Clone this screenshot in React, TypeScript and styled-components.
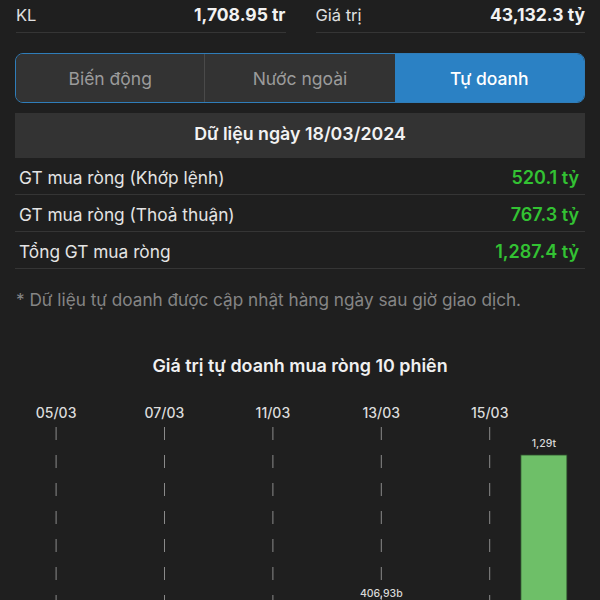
import React from "react";
import styled, { createGlobalStyle } from "styled-components";

const Global = createGlobalStyle`
  html, body { margin: 0; padding: 0; background: #1f1f1f; }
  body { font-family: Inter, "Noto Sans", sans-serif; color: #e6e6e6; -webkit-font-smoothing: antialiased; }
  * { box-sizing: border-box; }
`;

const Page = styled.div`
  padding: 0 15px;
  display: flex;
  flex-direction: column;
`;

const StatsRow = styled.div`
  display: grid;
  grid-template-columns: 1fr 1fr;
  column-gap: 30px;
  padding-left: 1px;
`;

const StatCell = styled.div`
  display: flex;
  justify-content: space-between;
  align-items: center;
  height: 33px;
  padding-bottom: 3px;
  border-bottom: 1px solid #353535;
`;

const StatLabel = styled.span`
  font-size: 16.5px;
  color: #e0e0e0;
`;

const StatValue = styled.span`
  font-size: 17.5px;
  font-weight: 700;
  color: #f2f2f2;
`;

const Segmented = styled.div`
  margin-top: 20px;
  height: 50px;
  display: grid;
  grid-template-columns: repeat(3, 1fr);
  border: 1.5px solid #2f7db9;
  border-radius: 8px;
  overflow: hidden;
  background: #343434;
`;

const Segment = styled.div<{ $active?: boolean; $divider?: boolean }>`
  display: flex;
  align-items: center;
  justify-content: center;
  font-size: 17.5px;
  font-weight: ${(p) => (p.$active ? 500 : 400)};
  color: ${(p) => (p.$active ? "#ffffff" : "#9b9b9b")};
  background: ${(p) => (p.$active ? "#2b81c4" : "#333333")};
  border-right: ${(p) => (p.$divider ? "1px solid #4a4a4a" : "none")};
`;

const DateHeader = styled.div`
  margin-top: 10px;
  height: 45px;
  padding-bottom: 4px;
  background: #333333;
  display: flex;
  align-items: center;
  justify-content: center;
  font-size: 17.8px;
  font-weight: 600;
  color: #f2f2f2;
`;

const DataRow = styled.div`
  height: 37px;
  display: flex;
  align-items: center;
  justify-content: space-between;
  padding: 2px 6px 0 4px;
  border-bottom: 1px solid #353535;
`;

const RowLabel = styled.span`
  font-size: 17.3px;
  color: #e4e4e4;
`;

const RowValue = styled.span`
  font-size: 18px;
  font-weight: 600;
  color: #33c233;
`;

const Note = styled.div`
  margin-top: 21px;
  padding-left: 1px;
  font-size: 17.2px;
  line-height: 20px;
  color: #858585;
`;

const ChartTitle = styled.div`
  margin-top: 45px;
  text-align: center;
  font-size: 17.9px;
  line-height: 22px;
  font-weight: 600;
  color: #f0f0f0;
`;

const ChartSvg = styled.svg`
  display: block;
  margin: 20px -15px 0;
`;

const rows = [
  { label: "GT mua ròng (Khớp lệnh)", value: "520.1 tỷ" },
  { label: "GT mua ròng (Thoả thuận)", value: "767.3 tỷ" },
  { label: "Tổng GT mua ròng", value: "1,287.4 tỷ" },
];

const sessions = [
  { d: "05/03", v: -300 },
  { d: "06/03", v: -150 },
  { d: "07/03", v: -200 },
  { d: "08/03", v: -100 },
  { d: "11/03", v: -250 },
  { d: "12/03", v: -120 },
  { d: "13/03", v: 406.93 },
  { d: "14/03", v: -80 },
  { d: "15/03", v: -180 },
  { d: "18/03", v: 1287.4 },
];

function Chart() {
  const top = 397;
  const base = 675;
  const H = 220;
  const max = 1287.4;
  const colW = 54.2;
  const x0 = 29;
  const oy = (y: number) => y - top;
  return (
    <ChartSvg width={600} height={320} viewBox={`0 0 600 320`}>
      {sessions.map((s, i) => {
        const cx = x0 + colW * i + colW / 2;
        const showLabel = i % 2 === 0;
        const h = (Math.abs(s.v) / max) * H;
        const y = s.v >= 0 ? base - h : base;
        return (
          <g key={s.d}>
            {showLabel && (
              <>
                <text
                  x={cx}
                  y={oy(418)}
                  textAnchor="middle"
                  fontFamily="Inter, 'Noto Sans', sans-serif"
                  fontSize={14}
                  fontWeight={500}
                  fill="#dcdcdc"
                >
                  {s.d}
                </text>
                <line
                  x1={cx}
                  x2={cx}
                  y1={oy(427)}
                  y2={320}
                  stroke="#8a8a8a"
                  strokeWidth={1}
                  strokeDasharray="13 15"
                />
              </>
            )}
            <rect
              x={cx - 23}
              y={oy(y)}
              width={46}
              height={h}
              fill={s.v >= 0 ? "#6ebf68" : "#e05a5a"}
              stroke="#2a4a2a"
              strokeWidth={0.8}
            />
            {s.v > 0 && (
              <text
                x={cx}
                y={oy(y) - 8}
                textAnchor="middle"
                fontFamily="Inter, 'Noto Sans', sans-serif"
                fontSize={10.5}
                fontWeight={500}
                fill="#d8d8d8"
              >
                {s.v > 1000 ? "1,29t" : "406,93b"}
              </text>
            )}
          </g>
        );
      })}
    </ChartSvg>
  );
}

export default function App() {
  return (
    <>
      <Global />
      <Page>
        <StatsRow>
          <StatCell>
            <StatLabel>KL</StatLabel>
            <StatValue>1,708.95 tr</StatValue>
          </StatCell>
          <StatCell>
            <StatLabel>Giá trị</StatLabel>
            <StatValue>43,132.3 tỷ</StatValue>
          </StatCell>
        </StatsRow>
        <Segmented>
          <Segment $divider>Biến động</Segment>
          <Segment>Nước ngoài</Segment>
          <Segment $active>Tự doanh</Segment>
        </Segmented>
        <DateHeader>Dữ liệu ngày 18/03/2024</DateHeader>
        {rows.map((r) => (
          <DataRow key={r.label}>
            <RowLabel>{r.label}</RowLabel>
            <RowValue>{r.value}</RowValue>
          </DataRow>
        ))}
        <Note>* Dữ liệu tự doanh được cập nhật hàng ngày sau giờ giao dịch.</Note>
        <ChartTitle>Giá trị tự doanh mua ròng 10 phiên</ChartTitle>
        <Chart />
      </Page>
    </>
  );
}
